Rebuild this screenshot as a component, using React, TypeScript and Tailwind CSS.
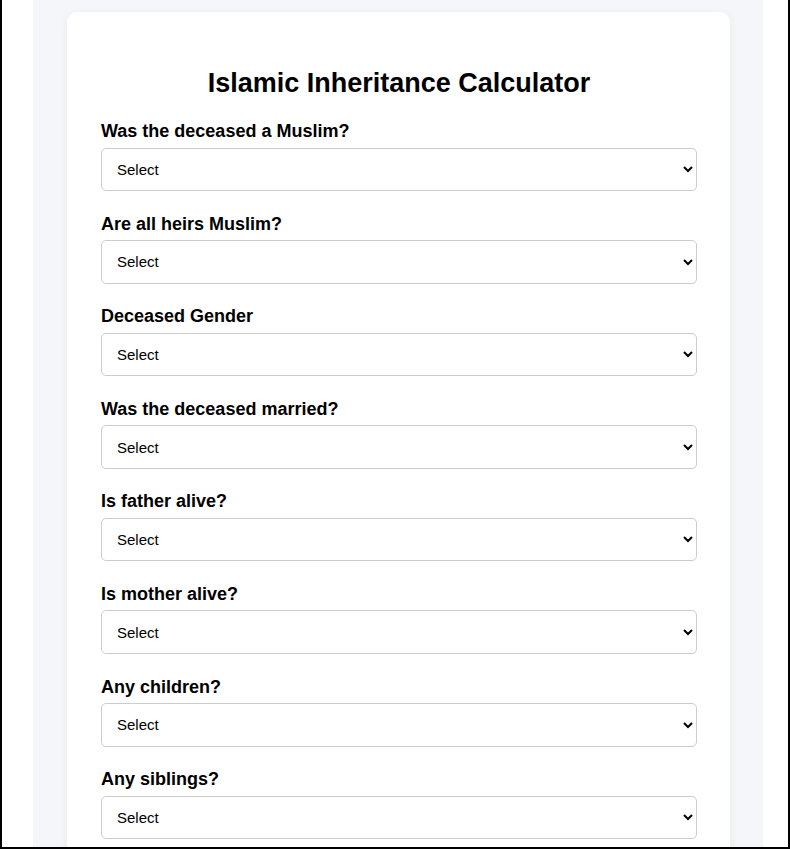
import React from "react";

const questions = [
  "Was the deceased a Muslim?",
  "Are all heirs Muslim?",
  "Deceased Gender",
  "Was the deceased married?",
  "Is father alive?",
  "Is mother alive?",
  "Any children?",
  "Any siblings?",
];

export default function App() {
  return (
    <div
      className="w-[790px] h-[849px] overflow-hidden bg-white border-l-2 border-r-2 border-b-2 border-black"
      style={{ fontFamily: '"Liberation Sans", Arial, sans-serif' }}
    >
      <div className="ml-[31px] w-[730px] min-h-[900px] bg-[#f5f6fa] pl-[34px] pr-[33px] pt-[12px]">
        <div className="bg-white rounded-[10px] shadow-[0_2px_8px_rgba(0,0,0,0.06)] pl-[34px] pr-[33px] pt-[34px] pb-8">
          <h1 className="text-center text-[27px] leading-[31px] font-bold text-black mt-[21.5px] mb-[22.5px]">
            Islamic Inheritance Calculator
          </h1>
          {questions.map((q) => (
            <div key={q} className="mb-[22.6px]">
              <label className="block text-[18px] leading-[21px] font-bold text-black mb-[5.5px]">
                {q}
              </label>
              <select className="block w-full h-[43.5px] rounded-[5px] border border-[#cccccc] bg-white text-[15px] text-black pl-[11px] pr-[6px]">
                <option>Select</option>
              </select>
            </div>
          ))}
        </div>
      </div>
    </div>
  );
}
